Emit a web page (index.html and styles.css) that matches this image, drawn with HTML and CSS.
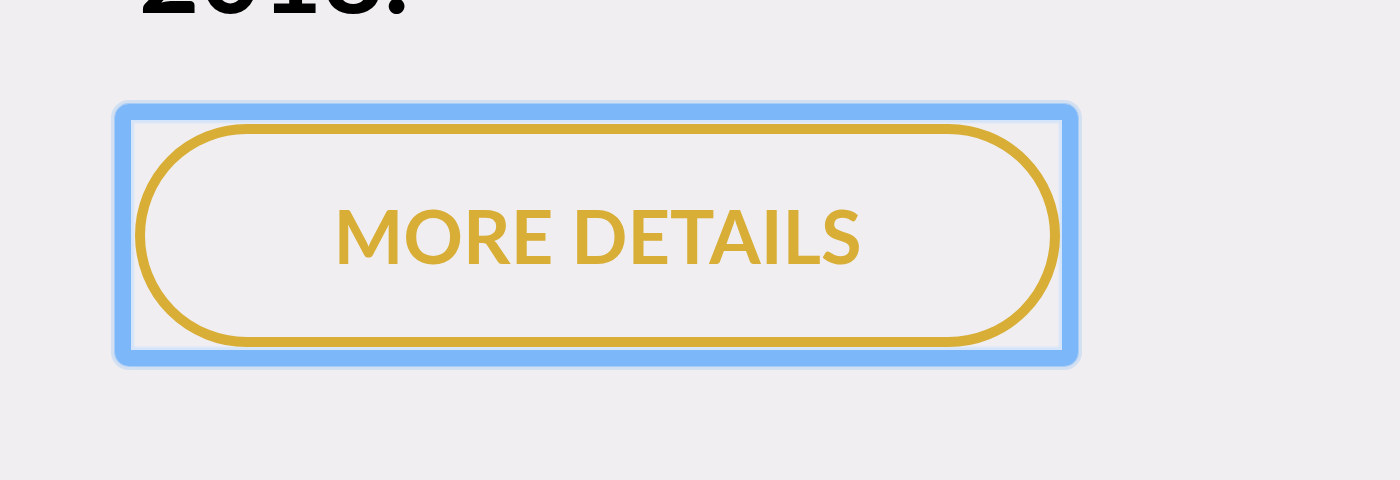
FILE: index.html
```html
<!DOCTYPE html>
<html lang="en">
<head>
<meta charset="utf-8">
<title>More details</title>
<link rel="stylesheet" href="styles.css">
</head>
<body>
<main class="page">
  <p class="intro">2018.</p>
  <div class="focus-ring">
    <button class="btn-more" type="button">MORE DETAILS</button>
  </div>
</main>
</body>
</html>
```
FILE: styles.css
```css
html, body {
  margin: 0;
  padding: 0;
  background: #f0eef1;
}
.page {
  display: flex;
  flex-direction: column;
  align-items: flex-start;
  padding-left: 115px;
  height: 480px;
  overflow: hidden;
}
.intro {
  margin: -77px 0 0 24px;
  font-family: "Lato", "Liberation Sans", sans-serif;
  font-size: 104px;
  line-height: 100px;
  font-weight: 700;
  letter-spacing: 1px;
  color: #000;
}
.focus-ring {
  margin-top: 81px;
  border: 16px solid #7cb7f9;
  border-radius: 14px;
  box-shadow: 0 0 0 1px rgba(124, 183, 249, 0.5), 0 0 0 4px rgba(124, 183, 249, 0.25), inset 0 0 2px 3px rgba(200, 224, 252, 0.7);
  padding: 4px 2px 3px 4px;
  display: flex;
}
.btn-more {
  width: 925px;
  height: 223px;
  box-sizing: border-box;
  border: 10px solid #d8ae37;
  border-radius: 112px;
  background: transparent;
  color: #d8ae37;
  font-family: "Lato", "Liberation Sans", sans-serif;
  font-weight: 700;
  font-size: 74px;
  letter-spacing: 0;
  padding: 0;
  outline: none;
}
```
